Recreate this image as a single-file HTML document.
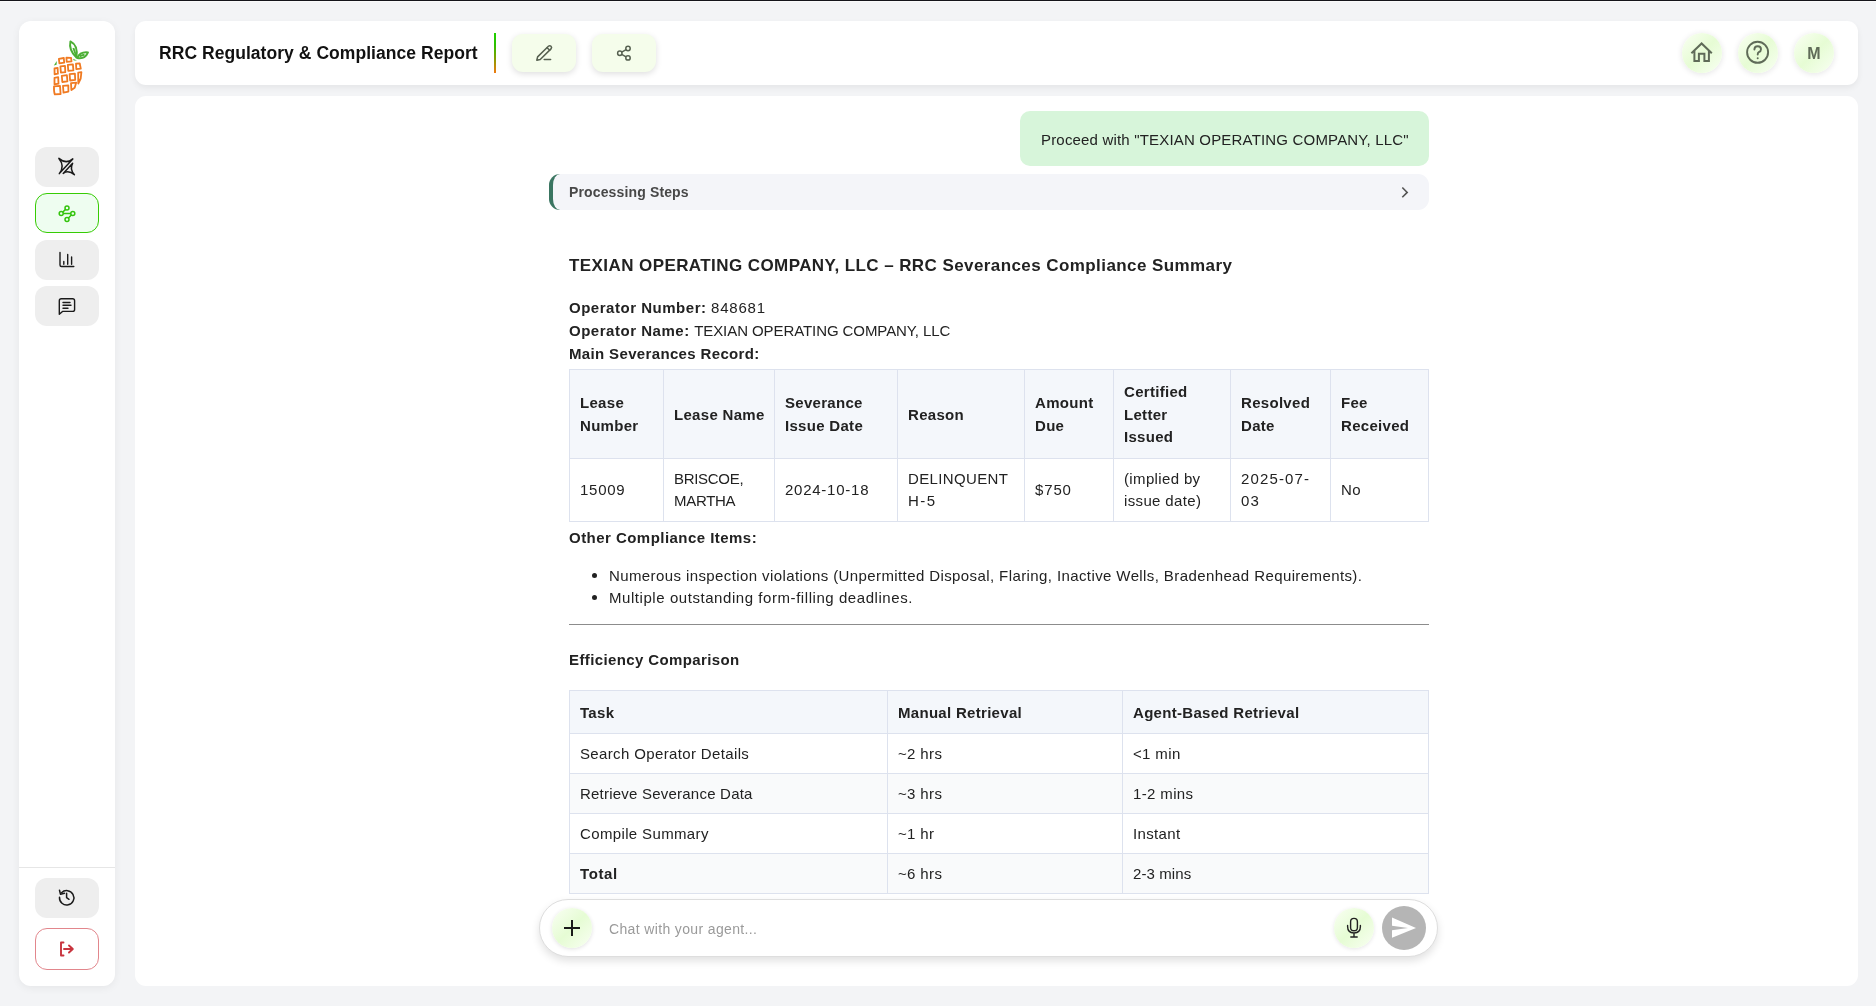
<!DOCTYPE html>
<html><head><meta charset="utf-8">
<style>
*{box-sizing:border-box;margin:0;padding:0}
html,body{width:1876px;height:1006px;overflow:hidden}
body{will-change:transform;background:#f3f4f6;font-family:"Liberation Sans",sans-serif;color:#222;position:relative}
.topline{position:absolute;left:0;top:0;width:1876px;height:1px;background:#15141a}
.topwhite{position:absolute;left:0;top:1px;width:1876px;height:1px;background:#fafafa}
.side{position:absolute;left:19px;top:21px;width:96px;height:965px;background:#fff;border-radius:12px;box-shadow:0 2px 8px rgba(0,0,0,.06)}
.nbtn{position:absolute;left:16px;width:64px;height:40px;border-radius:12px;background:#eeeeee}
.nbtn.act{background:#eefdf0;border:1px solid #36cc04}
.nbtn svg{position:absolute;left:0;top:0}
.sep{position:absolute;left:0;top:846px;width:96px;height:1px;background:#e6e6e6}
.logout{background:#fff;border:1px solid #e2868c}
.header{position:absolute;left:135px;top:21px;width:1723px;height:64px;background:#fff;border-radius:11px;box-shadow:0 3px 6px rgba(0,0,0,.06)}
.title{position:absolute;left:24px;top:19.8px;letter-spacing:.05px;font-size:17.5px;line-height:24px;font-weight:bold;color:#111;white-space:nowrap}
.divider{position:absolute;left:359px;top:12px;width:2px;height:40px;background:linear-gradient(#1fd000,#2cc000 30%,#7fa000 62%,#f07a10)}
.hbtn{position:absolute;top:13px;width:64px;height:38px;border-radius:11px;background:#f5fdeb;box-shadow:0 2px 6px rgba(0,0,0,.13)}
.hbtn svg,.circ svg,.plus svg,.mic svg,.send svg{position:absolute;left:0;top:0}
.circ{position:absolute;top:12px;width:40px;height:40px;border-radius:50%;background:linear-gradient(135deg,#fafff4 0%,#e6fcd4 50%,#f9fff3 100%);box-shadow:0 1px 6px rgba(0,0,0,.11);color:#5f6b58}
.main{position:absolute;left:135px;top:96px;width:1723px;height:890px;background:#fff;border-radius:11px;overflow:hidden}
.bubble{position:absolute;left:885px;top:15px;width:409px;height:55px;background:#d7f5da;border-radius:10px;font-size:15px;letter-spacing:.18px;color:#222;white-space:nowrap}
.bubble span{position:absolute;left:21px;top:18.5px;line-height:20px}
.steps{position:absolute;left:414px;top:78px;width:880px;height:36px;background:#f4f5f9;border-radius:11px;border-left:4px solid #3a7561}
.steps span{position:absolute;left:16px;top:9.3px;font-size:14px;line-height:18px;font-weight:bold;color:#484848;white-space:nowrap;letter-spacing:.14px}
.c{position:absolute;left:434px;white-space:nowrap}
.reg{font-size:15px;letter-spacing:.36px;line-height:22.5px;color:#222}
.b{font-weight:bold;letter-spacing:.3px}
h2{font-size:17px;font-weight:bold;line-height:24px;color:#222;letter-spacing:.42px}
table{border-collapse:collapse;table-layout:fixed;font-size:15px;letter-spacing:.36px;color:#222}
td,th{border:1px solid #dde2ee;padding:8px 10px;text-align:left;vertical-align:middle;line-height:22.5px;white-space:normal}
th{background:#f4f7fb;font-weight:bold;padding:10px 10px;letter-spacing:.3px}
.t2 tr.alt td{background:#f9fafb}
.t2 td{line-height:23px}
.t2 th{padding:10.5px 10px 8.5px}
.t1 td{padding:9px 10px 8px}
.t1 th{padding:11px 10px 9px}
ul{list-style:none}
li{position:relative;padding-left:40px;line-height:22px}
li:before{content:"";position:absolute;left:23px;top:8.3px;width:5px;height:5px;border-radius:50%;background:#222}
.hr{position:absolute;left:434px;top:528px;width:860px;height:1px;background:#8c8c8c}
.chat{position:absolute;left:404px;top:803px;width:899px;height:58px;border-radius:29px;background:#fff;border:1px solid #dedede;box-shadow:0 4px 9px rgba(0,0,0,.12)}
.plus{position:absolute;left:12px;top:8px;width:40px;height:40px;border-radius:50%;background:linear-gradient(135deg,#fafff4 0%,#e6fcd4 50%,#f9fff3 100%);box-shadow:0 1px 4px rgba(0,0,0,.12)}
.ph{position:absolute;left:69px;top:19px;font-size:14px;line-height:20px;letter-spacing:.36px;color:#9a9a9a}
.mic{position:absolute;left:794px;top:8px;width:40px;height:40px;border-radius:50%;background:linear-gradient(135deg,#fafff4 0%,#e6fcd4 50%,#f9fff3 100%);box-shadow:0 1px 4px rgba(0,0,0,.10)}
.send{position:absolute;left:842px;top:6px;width:44px;height:44px;border-radius:50%;background:#b5b5b5}
</style></head><body>
<div class="topline"></div><div class="topwhite"></div>

<div class="side">
  <svg style="position:absolute;left:0;top:0" width="96" height="100" viewBox="19 21 96 100">
    <g fill="none" stroke="#f07a22" stroke-width="1.8" stroke-linejoin="round">
      <path d="M58.9 58.8 L63.8 58.0 L64.2 62.7 L59.4 63.4 Z"/>
      <path d="M66.4 57.6 L71.1 57.9 L71.5 61.3 L66.7 61.9 Z"/>
      <path d="M54.5 68.5 L57.6 67.8 L57.9 73.7 L54.6 74.3 Z"/>
      <path d="M60.4 66.4 L65.0 65.9 L65.3 72.2 L60.9 72.7 Z"/>
      <path d="M67.8 64.8 L72.9 64.4 L73.4 70.4 L68.3 70.9 Z"/>
      <path d="M76.0 63.6 L79.7 63.3 L80.8 68.6 L76.3 69.1 Z"/>
      <path d="M54.5 77.9 L58.2 77.1 L58.5 83.7 L54.5 84.3 Z"/>
      <path d="M61.8 75.8 L66.9 75.2 L67.4 81.4 L62.3 82.0 Z"/>
      <path d="M69.6 74.2 L74.9 73.6 L75.2 79.8 L70.1 80.5 Z"/>
      <path d="M78.2 72.7 L81.4 72.2 L80.7 78.5 L78.3 83.5 Z"/>
      <path d="M54 86.4 L60 85.9 L60.6 94 L54.8 94.4 Q53.8 92 54 86.4 Z"/>
      <path d="M63.0 85.8 L68.3 85.3 L68.4 91.6 L63.5 92.7 Z"/>
      <path d="M71.0 83.2 L76.2 82.6 L74.7 87.8 L71.4 90.1 Z"/>
    </g>
    <g fill="none" stroke="#4caf35" stroke-width="1.9" stroke-linejoin="round">
      <path d="M76.4 57.6 Q68.5 50 70.4 41.4 Q78.5 45.5 76.4 57.6 Z"/>
      <path d="M73.4 48 L76 55.5"/>
      <path d="M77.2 58 Q80 51.5 88 52.4 Q85 59.5 77.2 58 Z"/>
      <path d="M79.5 56.4 L84.5 54.5"/>
    </g>
    <path d="M53.8 65.4 L56.8 61 L56.6 64.8 Z" fill="#4caf35"/>
    <path d="M73 58.7 L77 60.4 L73.8 60.6 Z" fill="#4caf35"/>
  </svg>
  <div class="nbtn" style="top:126px">
    <svg width="64" height="40" viewBox="0 0 64 40"><g fill="none" stroke="#1a1a1a" stroke-width="1.5" stroke-linejoin="round" stroke-linecap="round"><path d="M24.3 26.6 Q30.2 19 23.9 11.4 Q31 17.6 37.8 11.9 Z"/><path d="M28.2 26.4 L37.6 16.3 Q34.4 22 39.4 27.7 Q33.4 22.6 28.2 26.4 Z"/></g></svg>
  </div>
  <div class="nbtn act" style="top:172px">
    <svg width="62" height="38" viewBox="1 1 62 38"><g fill="none" stroke="#33c40c" stroke-width="1.5"><circle cx="32" cy="15" r="2"/><circle cx="26.2" cy="20.6" r="2"/><circle cx="37.8" cy="20.6" r="2"/><circle cx="32" cy="26.4" r="2"/><path d="M28.2 20.6 H35.8 M30.6 16.4 L27.6 19.2 M33.4 25 L36.4 22"/></g></svg>
  </div>
  <div class="nbtn" style="top:219px">
    <svg width="64" height="40" viewBox="0 0 64 40"><g fill="none" stroke="#1a1a1a" stroke-width="1.4" stroke-linecap="round" stroke-linejoin="round"><path d="M25 12.5 V25 Q25 26.5 26.5 26.5 H38.8"/><path d="M28.8 21.5 V24.3 M32.7 14.5 V24.3 M36.6 17 V24.3"/></g></svg>
  </div>
  <div class="nbtn" style="top:265px">
    <svg width="64" height="40" viewBox="0 0 64 40"><g fill="none" stroke="#1a1a1a" stroke-width="1.4" stroke-linecap="round" stroke-linejoin="round"><path d="M24.3 28.3 V14.7 Q24.3 12.7 26.3 12.7 H37.6 Q39.6 12.7 39.6 14.7 V23.4 Q39.6 25.4 37.6 25.4 H27.5 Z"/><path d="M28 16.5 H35 M28 19.3 H36 M28 22.3 H33"/></g></svg>
  </div>
  <div class="sep"></div>
  <div class="nbtn" style="top:857px">
    <svg width="64" height="40" viewBox="0 0.7 64 40"><g fill="none" stroke="#1a1a1a" stroke-width="1.5" stroke-linecap="round" stroke-linejoin="round"><path d="M26.5 15.5 A7.2 7.2 0 1 1 24.5 20"/><path d="M24.5 13 L25.5 17 L29.5 16"/><path d="M31.6 16 V20.4 L34 22"/></g></svg>
  </div>
  <div class="nbtn logout" style="top:907px;height:42px">
    <svg width="62" height="40" viewBox="1 1 62 40"><g fill="none" stroke="#c8343e" stroke-width="1.9" stroke-linecap="round" stroke-linejoin="round"><path d="M28.5 14.5 H26 V27.5 H28.5"/><path d="M29 21 H37.5 M34 17.5 L37.8 21 L34 24.5"/></g></svg>
  </div>
</div>

<div class="header">
  <div class="title">RRC Regulatory &amp; Compliance Report</div>
  <div class="divider"></div>
  <div class="hbtn" style="left:377px">
    <svg width="64" height="38" viewBox="0 0 64 38"><g fill="none" stroke="#566050" stroke-width="1.5" stroke-linecap="round" stroke-linejoin="round"><path d="M24.8 26.2 L25.6 22.9 L36.4 12.3 Q37.8 11.1 39 12.3 Q40.2 13.6 39 14.9 L28.2 25.5 Z"/><path d="M35.1 13.7 L37.7 16.3"/><path d="M32.2 25.6 H38.6"/></g></svg>
  </div>
  <div class="hbtn" style="left:457px">
    <svg width="64" height="38" viewBox="0 0 64 38"><g fill="none" stroke="#566050" stroke-width="1.5"><circle cx="36" cy="14.5" r="2.2"/><circle cx="27.8" cy="19.2" r="2.2"/><circle cx="36" cy="23.9" r="2.2"/><path d="M29.7 18.1 L34.1 15.6 M29.7 20.3 L34.1 22.8"/></g></svg>
  </div>
  <div class="circ" style="left:1547px">
    <svg width="40" height="40" viewBox="0 0 40 40"><g fill="none" stroke="#5f6b58" stroke-width="2" stroke-linejoin="miter"><path d="M9.4 20.2 L19.6 10.5 L29.8 20.2 M12.4 17.4 V28 H16.9 V20.8 H22.4 V28 H26.9 V17.4"/></g></svg>
  </div>
  <div class="circ" style="left:1603px">
    <svg width="40" height="40" viewBox="0 0 40 40"><g fill="none" stroke="#5f6b58" stroke-width="1.9" stroke-linecap="round"><circle cx="19.6" cy="19.3" r="10.5"/><path d="M16.4 16.6 Q16.4 13.2 19.7 13.2 Q23 13.2 23 16.3 Q23 18.3 20.8 19.2 Q19.7 19.8 19.7 21.6"/></g><circle cx="19.7" cy="25.2" r="1" fill="#5f6b58"/></svg>
  </div>
  <div class="circ" style="left:1659px"><span style="position:absolute;left:0;top:11px;width:40px;text-align:center;font-size:16px;font-weight:bold;line-height:20px;color:#5f6b58">M</span></div>
</div>

<div class="main">
  <div class="bubble"><span>Proceed with "TEXIAN OPERATING COMPANY, LLC"</span></div>
  <div class="steps"><span>Processing Steps</span>
    <svg style="position:absolute;left:845px;top:11.5px" width="16" height="16" viewBox="0 0 16 16"><path d="M4.3 1.5 L9.2 6.4 L4.3 11.3" fill="none" stroke="#555" stroke-width="1.6"/></svg>
  </div>
  <div class="c" style="top:158px"><h2>TEXIAN OPERATING COMPANY, LLC – RRC Severances Compliance Summary</h2></div>
  <div class="c reg" style="top:199.8px;line-height:23px">
    <div><span class="b" style="letter-spacing:.52px">Operator Number:</span> <span style="letter-spacing:.8px">848681</span></div>
    <div><span class="b" style="letter-spacing:.52px">Operator Name:</span> <span style="letter-spacing:-.08px">TEXIAN OPERATING COMPANY, LLC</span></div>
    <div><span class="b" style="letter-spacing:.35px">Main Severances Record:</span></div>
  </div>
  <div class="c" style="top:273px">
    <table class="t1" style="width:859px">
      <colgroup><col style="width:94px"><col style="width:111px"><col style="width:123px"><col style="width:127px"><col style="width:89px"><col style="width:117px"><col style="width:100px"><col style="width:98px"></colgroup>
      <tr><th>Lease Number</th><th style="white-space:nowrap">Lease Name</th><th>Severance Issue Date</th><th>Reason</th><th>Amount Due</th><th>Certified Letter Issued</th><th>Resolved Date</th><th>Fee Received</th></tr>
      <tr><td style="letter-spacing:.75px">15009</td><td style="letter-spacing:-.3px">BRISCOE, MARTHA</td><td style="letter-spacing:.75px">2024-10-18</td><td>DELINQUENT <span style="letter-spacing:1.5px">H-5</span></td><td style="letter-spacing:.85px">$750</td><td>(implied by issue date)</td><td style="letter-spacing:1.15px">2025-07-03</td><td>No</td></tr>
    </table>
  </div>
  <div class="c reg" style="top:431px"><span class="b" style="letter-spacing:.46px">Other Compliance Items:</span></div>
  <div class="c reg" style="top:469px">
    <ul><li style="letter-spacing:.4px">Numerous inspection violations (Unpermitted Disposal, Flaring, Inactive Wells, Bradenhead Requirements).</li>
    <li style="letter-spacing:.56px">Multiple outstanding form-filling deadlines.</li></ul>
  </div>
  <div class="hr"></div>
  <div class="c reg" style="top:552.5px"><span class="b" style="letter-spacing:.38px">Efficiency Comparison</span></div>
  <div class="c" style="top:594px">
    <table class="t2" style="width:859px">
      <colgroup><col style="width:318px"><col style="width:235px"><col style="width:306px"></colgroup>
      <tr><th>Task</th><th>Manual Retrieval</th><th>Agent-Based Retrieval</th></tr>
      <tr><td>Search Operator Details</td><td>~2 hrs</td><td>&lt;1 min</td></tr>
      <tr class="alt"><td style="letter-spacing:.22px">Retrieve Severance Data</td><td>~3 hrs</td><td>1-2 mins</td></tr>
      <tr><td>Compile Summary</td><td>~1 hr</td><td>Instant</td></tr>
      <tr class="alt"><td><b style="letter-spacing:.6px">Total</b></td><td>~6 hrs</td><td style="letter-spacing:.1px">2-3 mins</td></tr>
    </table>
  </div>
  <div class="chat">
    <div class="plus"><svg width="40" height="40" viewBox="0 0 40 40"><path d="M20 12 V28 M12 20 H28" stroke="#1a1a1a" stroke-width="2"/></svg></div>
    <div class="ph">Chat with your agent...</div>
    <div class="mic"><svg width="40" height="40" viewBox="0 0 40 40"><g fill="none" stroke="#222" stroke-width="1.4" stroke-linecap="round"><rect x="16.6" y="10.4" width="6.8" height="12.4" rx="3.4"/><path d="M13.6 17.4 V18.6 Q13.6 25 20 25 Q26.4 25 26.4 18.6 V17.4 M20 25 V29 M16.8 29 H23.2"/></g></svg></div>
    <div class="send"><svg width="44" height="44" viewBox="0 0 44 44"><path d="M10 11.6 L34 22 L10 31.8 L10 24.2 L26 22 L10 19.8 Z" fill="#fff"/></svg></div>
  </div>
</div>
</body></html>
